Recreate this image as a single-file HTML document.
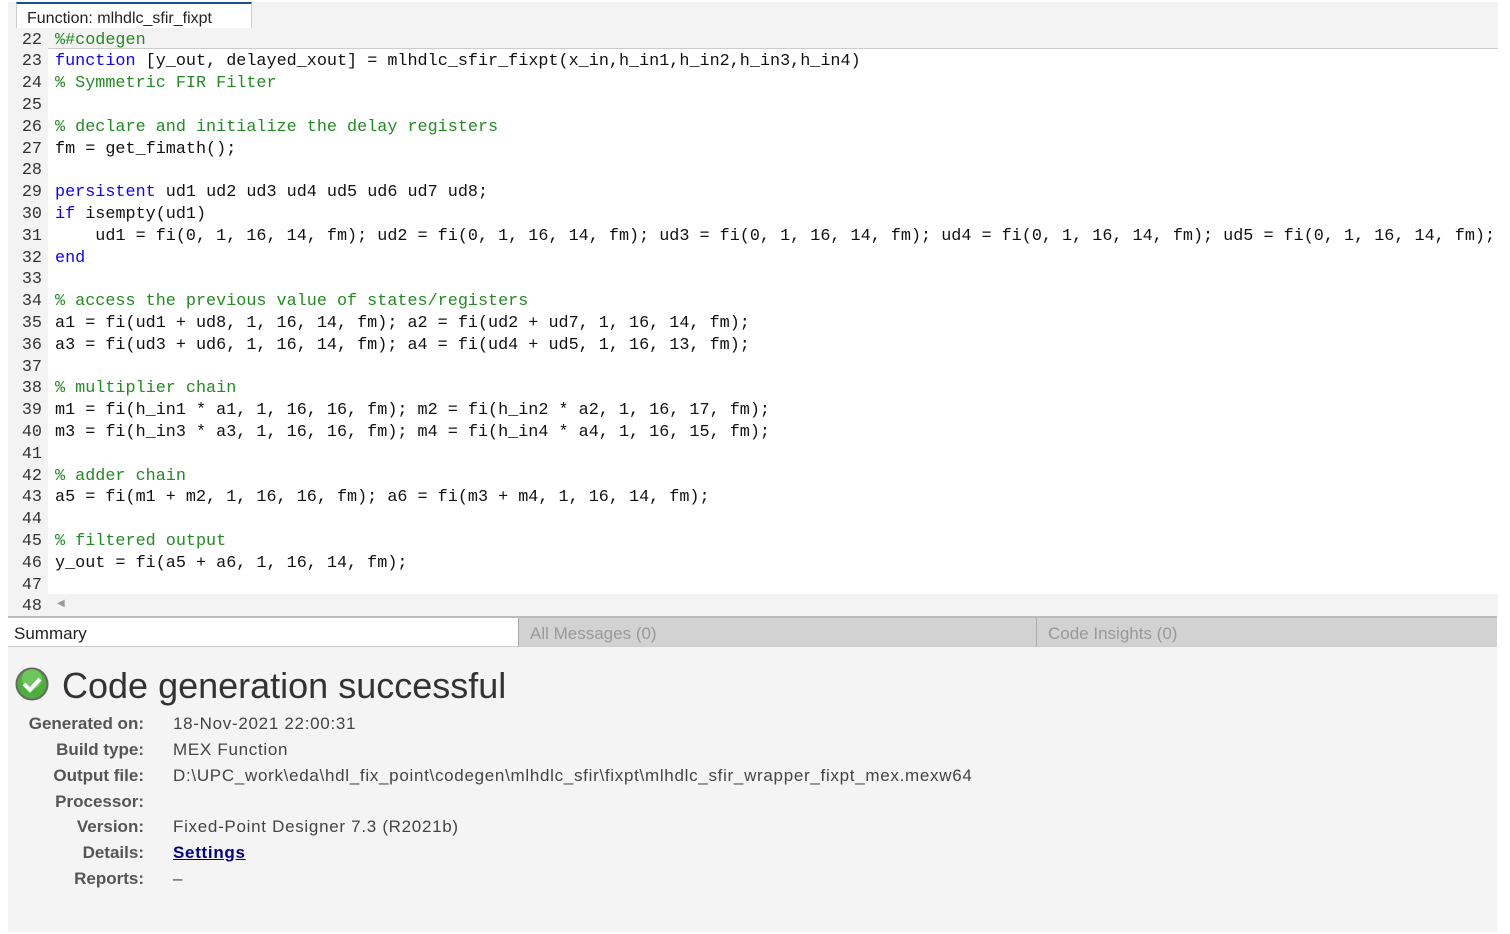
<!DOCTYPE html>
<html><head><meta charset="utf-8"><style>
*{margin:0;padding:0;box-sizing:border-box}
body{width:1510px;height:934px;background:#fff;position:relative;overflow:hidden;font-family:"Liberation Sans",sans-serif}
.tabbar{position:absolute;left:8px;top:2px;width:1490px;height:28px;background:#f3f3f3;border-bottom:1px solid #ccc}
.tab{position:absolute;left:16px;top:2px;width:236px;height:28px;background:#fff;border-top:2px solid #1a4f8f;border-left:1px solid #ccc;border-right:1px solid #ccc;font-size:16px;color:#222;padding:6px 0 0 10px}
.code{position:absolute;left:8px;top:28px;width:1490px;height:566px;background:#fff;overflow:hidden}
.gut{position:absolute;left:8px;top:28px;width:40px;height:588px;background:#f3f3f3}
.ln{position:absolute;left:8px;width:34px;text-align:right;font-family:"Liberation Mono",monospace;font-size:16.8px;color:#333}
.cl{position:absolute;left:55px;font-family:"Liberation Mono",monospace;font-size:16.8px;color:#111;white-space:pre}
.k{color:#0e00ff}.c{color:#228b22}
.hl{position:absolute;left:48px;top:28px;width:1450px;height:21px;background:#f3f3f3;border-bottom:1px solid #ccc}
.bot{position:absolute;left:48px;top:594px;width:1450px;height:22px;background:#f3f3f3}
.panel{position:absolute;left:8px;top:616px;width:1489px;height:316px;background:#f4f4f4;border-top:2px solid #bbb}
.t{position:absolute;top:0;height:29px;font-family:"Liberation Sans",sans-serif;font-size:17px;padding:6px 0 0 6px;border-bottom:1px solid #ccc}
.row{position:absolute;left:14px;height:22px;width:1100px;font-size:17px;color:#444}
.row .lab{position:absolute;left:0;width:122px;text-align:right;font-weight:bold;color:#555;font-size:17px}
.row .v{position:absolute;left:151px;letter-spacing:.7px}
#lines{position:absolute;left:0;top:0;width:1497px;height:616px;overflow:hidden}
</style></head><body>
<div class="tabbar"></div>
<div class="tab">Function: mlhdlc_sfir_fixpt</div>
<div class="code"></div>
<div class="hl"></div>
<div class="gut"></div>
<div class="bot"><span style="position:absolute;left:9px;top:4px;font-size:10px;color:#999">◀</span></div>
<div id="lines"></div>
<div class="panel">
 <div class="t" style="left:0;width:510px;background:#fff;color:#222">Summary</div>
 <div class="t" style="left:510px;width:518px;background:#d2d2d2;color:#999;border-left:1px solid #aaa;padding-left:11px">All Messages (0)</div>
 <div class="t" style="left:1028px;width:461px;background:#d2d2d2;color:#999;border-left:1px solid #aaa;padding-left:11px">Code Insights (0)</div>
 <svg style="position:absolute;left:7px;top:49px" width="34" height="34" viewBox="0 0 34 34"><circle cx="17" cy="17" r="15.5" fill="#4caf3c" stroke="#666" stroke-width="2"/><circle cx="17" cy="12" r="10" fill="#8fdc7a" opacity=".5"/><path d="M9 17l6 6 10-11" stroke="#fff" stroke-width="4" fill="none"/></svg>
 <div style="position:absolute;left:54px;top:47px;font-size:36px;color:#333">Code generation successful</div>
 <div class="row" style="top:96px"><span class="lab">Generated on:</span><span class="v">18-Nov-2021 22:00:31</span></div>
 <div class="row" style="top:122px"><span class="lab">Build type:</span><span class="v">MEX Function</span></div>
 <div class="row" style="top:148px"><span class="lab">Output file:</span><span class="v">D:\UPC_work\eda\hdl_fix_point\codegen\mlhdlc_sfir\fixpt\mlhdlc_sfir_wrapper_fixpt_mex.mexw64</span></div>
 <div class="row" style="top:174px"><span class="lab">Processor:</span></div>
 <div class="row" style="top:199px"><span class="lab">Version:</span><span class="v">Fixed-Point Designer 7.3 (R2021b)</span></div>
 <div class="row" style="top:225px"><span class="lab">Details:</span><span class="v" style="color:#00008b;font-weight:bold;text-decoration:underline">Settings</span></div>
 <div class="row" style="top:251px"><span class="lab">Reports:</span><span class="v">–</span></div>
</div>
<script>
var L=[
['<span class="c">%#codegen</span>'],
['<span class="k">function</span> [y_out, delayed_xout] = mlhdlc_sfir_fixpt(x_in,h_in1,h_in2,h_in3,h_in4)'],
['<span class="c">% Symmetric FIR Filter</span>'],
[''],
['<span class="c">% declare and initialize the delay registers</span>'],
['fm = get_fimath();'],
[''],
['<span class="k">persistent</span> ud1 ud2 ud3 ud4 ud5 ud6 ud7 ud8;'],
['<span class="k">if</span> isempty(ud1)'],
['    ud1 = fi(0, 1, 16, 14, fm); ud2 = fi(0, 1, 16, 14, fm); ud3 = fi(0, 1, 16, 14, fm); ud4 = fi(0, 1, 16, 14, fm); ud5 = fi(0, 1, 16, 14, fm);'],
['<span class="k">end</span>'],
[''],
['<span class="c">% access the previous value of states/registers</span>'],
['a1 = fi(ud1 + ud8, 1, 16, 14, fm); a2 = fi(ud2 + ud7, 1, 16, 14, fm);'],
['a3 = fi(ud3 + ud6, 1, 16, 14, fm); a4 = fi(ud4 + ud5, 1, 16, 13, fm);'],
[''],
['<span class="c">% multiplier chain</span>'],
['m1 = fi(h_in1 * a1, 1, 16, 16, fm); m2 = fi(h_in2 * a2, 1, 16, 17, fm);'],
['m3 = fi(h_in3 * a3, 1, 16, 16, fm); m4 = fi(h_in4 * a4, 1, 16, 15, fm);'],
[''],
['<span class="c">% adder chain</span>'],
['a5 = fi(m1 + m2, 1, 16, 16, fm); a6 = fi(m3 + m4, 1, 16, 14, fm);'],
[''],
['<span class="c">% filtered output</span>'],
['y_out = fi(a5 + a6, 1, 16, 14, fm);'],
[''],
['']];
var h='';
for(var i=0;i<L.length;i++){var y=30.5+i*21.8;
h+='<div class="ln" style="top:'+y+'px">'+(22+i)+'</div><div class="cl" style="top:'+y+'px">'+L[i][0]+'</div>';}
document.getElementById('lines').innerHTML=h;
</script>
</body></html>
